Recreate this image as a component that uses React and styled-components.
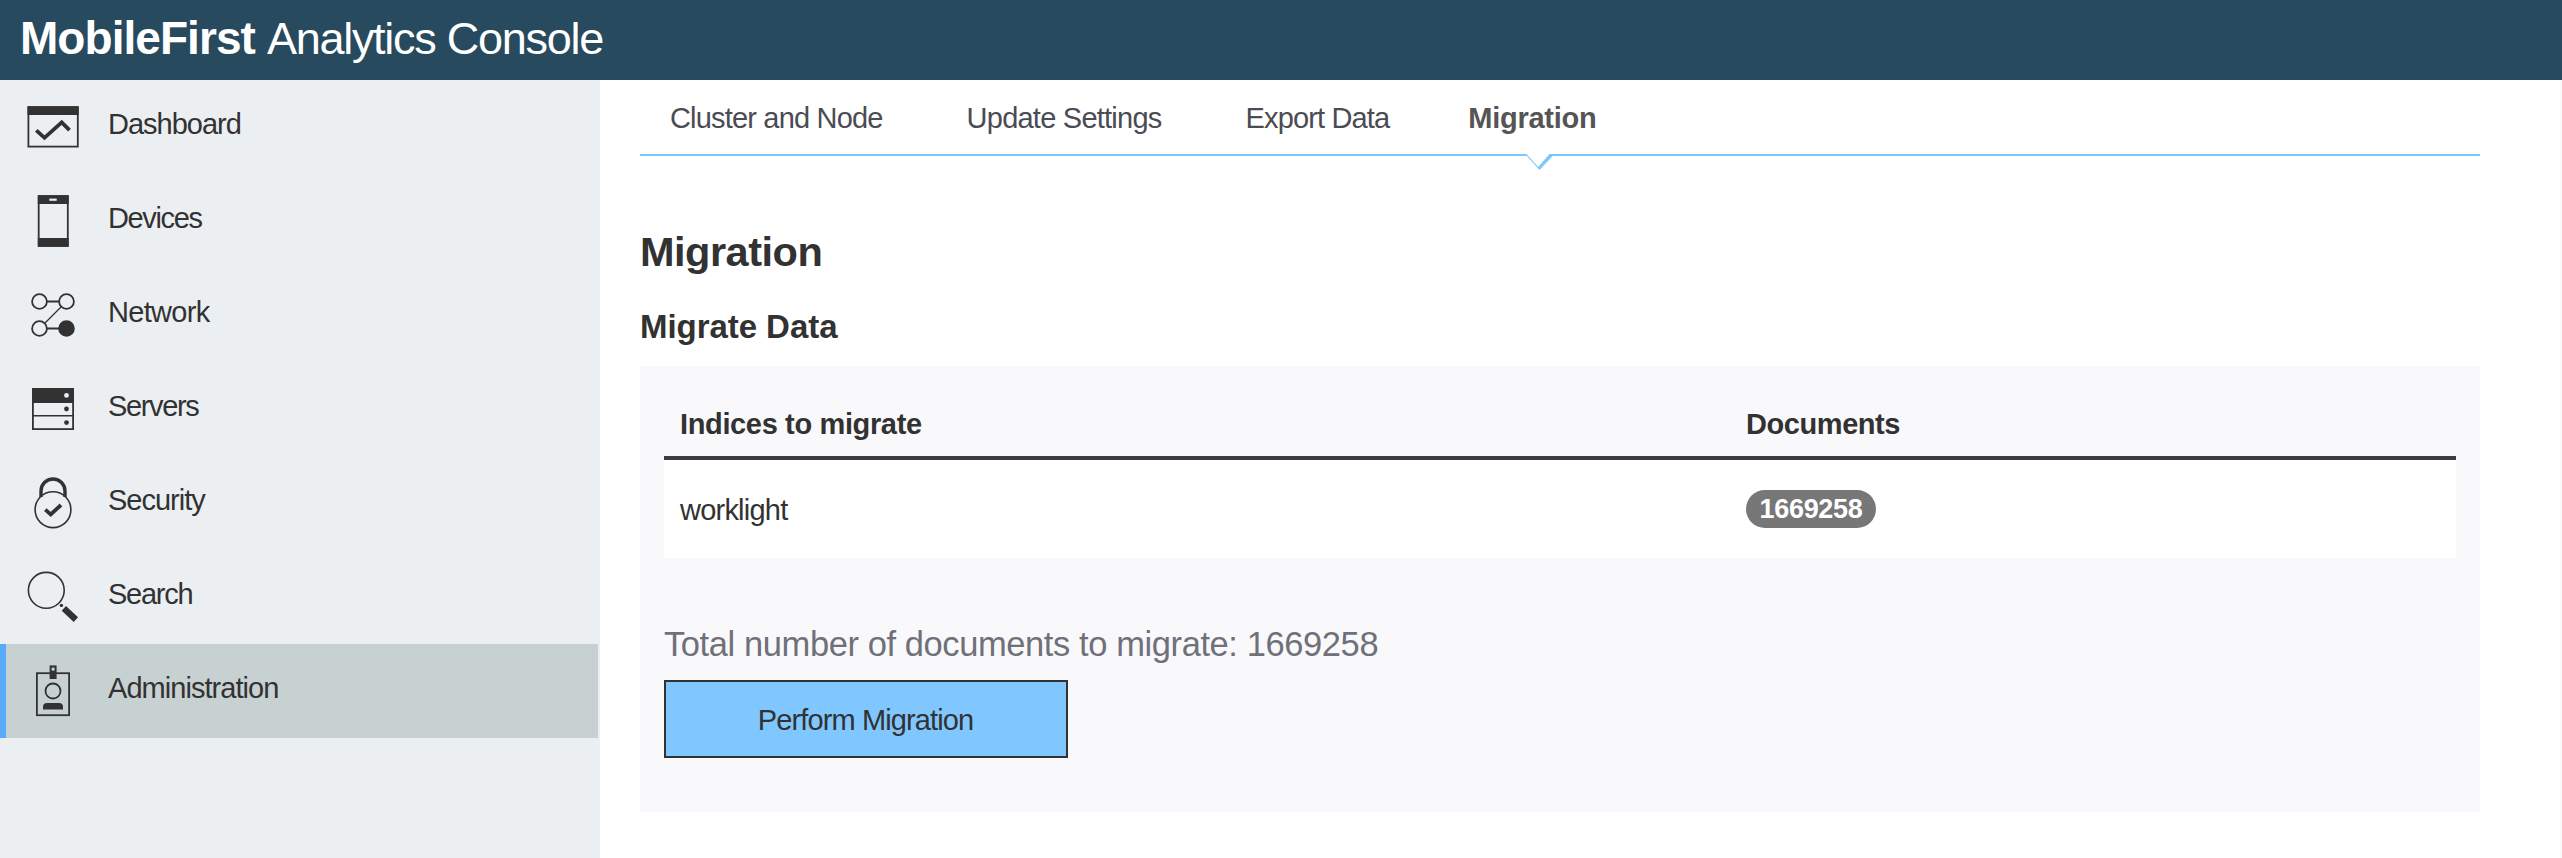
import React from "react";
import styled, { createGlobalStyle } from "styled-components";

const ink = "#323232";

const GlobalStyle = createGlobalStyle`
  *, *::before, *::after { box-sizing: border-box; }
  html, body { margin: 0; padding: 0; background: #fff; }
  body {
    font-family: "Liberation Sans", Arial, Helvetica, sans-serif;
    font-size: 29px;
    color: ${ink};
    overflow: hidden;
  }
`;

const Page = styled.div`
  display: flex;
  flex-direction: column;
  height: 100vh;
  min-height: 858px;
`;

const Header = styled.header`
  display: flex;
  align-items: baseline;
  gap: 12px;
  height: 80px;
  padding-left: 20px;
  background: #284a5e;
  color: #fff;
  line-height: 77px;
  white-space: nowrap;
`;

const Brand = styled.strong`
  font-size: 46px;
  font-weight: 700;
  letter-spacing: -0.95px;
`;

const Product = styled.span`
  font-size: 45px;
  letter-spacing: -1.27px;
`;

const Body = styled.div`
  display: flex;
  flex: 1;
`;

const Sidebar = styled.nav`
  width: 600px;
  padding-right: 2px;
  background: #ebeff2;
`;

const NavItem = styled.a`
  display: flex;
  gap: 24px;
  height: 94px;
  padding-left: 18px;
  border-left: 6px solid ${(p) => (p.$active ? "#5aaafa" : "transparent")};
  background: ${(p) => (p.$active ? "#c8d1d2" : "transparent")};
`;

const NavLabel = styled.span`
  line-height: 88px;
  letter-spacing: ${(p) => p.$track}px;
  white-space: nowrap;
`;

const IconSvg = styled.svg`
  flex: none;
  width: 60px;
  height: 94px;
  fill: none;
  stroke: ${ink};
  stroke-width: 1.8;
`;

const Main = styled.main`
  flex: 1;
  padding: 0 80px 0 40px;
  border-right: 2px solid #fafafa;
`;

const Tabs = styled.div`
  display: flex;
  gap: 84px;
  height: 76px;
  padding: 10px 0 0 30px;
  border-bottom: 2px solid #7cc7ff;
`;

const Tab = styled.a`
  position: relative;
  line-height: 56px;
  margin-left: ${(p) => (p.$active ? "-5px" : "0")};
  color: ${(p) => (p.$active ? "#555" : "#4b4b53")};
  font-weight: ${(p) => (p.$active ? 700 : 400)};
  letter-spacing: ${(p) => p.$track}px;
  white-space: nowrap;
`;

const Pointer = styled.svg`
  position: absolute;
  left: 56px;
  top: 64px;
  width: 32px;
  height: 17px;
`;

const Title = styled.h1`
  margin: 72px 0 0;
  font-size: 41.5px;
  line-height: 48px;
  letter-spacing: -0.5px;
`;

const Subtitle = styled.h2`
  margin: 31px 0 0;
  font-size: 33px;
  line-height: 40px;
  letter-spacing: -0.05px;
`;

const Panel = styled.section`
  margin-top: 19px;
  padding: 24px 24px 54px;
  background: #f9f9fb;
`;

const Row = styled.div`
  display: grid;
  grid-template-columns: 1066px 1fr;
`;

const HeadRow = styled(Row)`
  padding: 14px 0 12px;
  border-bottom: 4px solid #3c3d3f;
  font-weight: 700;
  line-height: 40px;
`;

const DataRow = styled(Row)`
  height: 98px;
  background: #fff;
  line-height: 80px;
`;

const Cell = styled.div`
  padding: ${(p) => p.$top || 0}px 16px 0;
  letter-spacing: ${(p) => p.$track || 0}px;
`;

const Badge = styled.span`
  display: block;
  width: 130px;
  height: 38px;
  border-radius: 20px;
  background: #777;
  color: #fff;
  font-size: 27px;
  font-weight: 700;
  line-height: 38px;
  letter-spacing: -0.3px;
  text-align: center;
`;

const Total = styled.p`
  margin: 62px 0 12px;
  color: #70707a;
  font-size: 34.5px;
  line-height: 48px;
  letter-spacing: -0.41px;
`;

const Button = styled.button`
  display: block;
  width: 404px;
  height: 78px;
  padding: 2px 1px 0 0;
  border: 2px solid ${ink};
  border-radius: 0;
  background: #80c7ff;
  color: ${ink};
  font: inherit;
  letter-spacing: -0.88px;
`;

const Icon = ({ children }) => (
  <IconSvg viewBox="24 0 60 94" aria-hidden="true">
    {children}
  </IconSvg>
);

const DashboardIcon = () => (
  <Icon>
    <rect x="28.4" y="27" width="49.4" height="39.6" />
    <rect x="27.5" y="26.7" width="51.2" height="8.3" fill={ink} stroke="none" />
    <path d="M36.3 50.3 44.5 57.8 61.7 42.3 69.5 50.2" strokeWidth="3.8" />
  </Icon>
);

const DevicesIcon = () => (
  <Icon>
    <rect x="38.7" y="22" width="29.1" height="50" />
    <path d="M37.8 21.4h30.9V30H37.8zM37.8 64h30.9v8.6H37.8z" fill={ink} stroke="none" />
    <rect x="49.3" y="24.6" width="7.4" height="2.2" fill="#ebeff2" stroke="none" />
  </Icon>
);

const NetworkIcon = () => (
  <Icon>
    <circle cx="39.5" cy="33.5" r="7.4" />
    <circle cx="66.5" cy="33.5" r="7.4" />
    <circle cx="39.5" cy="60.5" r="7.4" />
    <circle cx="66.5" cy="60.5" r="7.4" fill={ink} />
    <path d="M47 33.5h12M47 60.5h12" />
    <path d="M61 39 45 55" strokeWidth="1.2" />
  </Icon>
);

const ServersIcon = () => (
  <Icon>
    <rect x="32.9" y="26.9" width="40.2" height="40.2" />
    <path d="M32 26h42v15H32z" fill={ink} stroke="none" />
    <path d="M32 53.7h42" strokeWidth="1.5" />
    <circle cx="66.5" cy="33.4" r="2.4" fill="#ebeff2" stroke="none" />
    <circle cx="66.5" cy="47" r="2.4" fill={ink} stroke="none" />
    <circle cx="66.5" cy="60.6" r="2.4" fill={ink} stroke="none" />
  </Icon>
);

const SecurityIcon = () => (
  <Icon>
    <circle cx="53" cy="53.7" r="17.9" strokeWidth="1.6" />
    <path d="M41 41v-6a12 12 0 0 1 24 0v6" strokeWidth="3.4" />
    <path d="M45.3 53.7 50.7 58.5 61 49" strokeWidth="3.8" />
  </Icon>
);

const SearchIcon = () => (
  <Icon>
    <circle cx="46.3" cy="40.3" r="17.9" strokeWidth="1.6" />
    <circle cx="61.4" cy="55.4" r="1.7" fill={ink} stroke="none" />
    <path d="M66 56 61.7 60.7 73.7 72 78 67.3z" fill={ink} stroke="none" />
  </Icon>
);

const AdministrationIcon = () => (
  <Icon>
    <rect x="36.9" y="29.2" width="32.2" height="42" />
    <path d="M49.6 21.4h7V35h-7z" fill={ink} stroke="none" />
    <rect x="51.6" y="23.6" width="3" height="3" fill="#c8d1d2" stroke="none" />
    <circle cx="53" cy="47" r="7.5" />
    <path d="M43 65.5V63a4 4 0 0 1 4-4h12a4 4 0 0 1 4 4v2.5z" fill={ink} stroke="none" />
  </Icon>
);

const navItems = [
  { label: "Dashboard", track: -1.0, Glyph: DashboardIcon },
  { label: "Devices", track: -1.35, Glyph: DevicesIcon },
  { label: "Network", track: -0.7, Glyph: NetworkIcon },
  { label: "Servers", track: -1.35, Glyph: ServersIcon },
  { label: "Security", track: -1.0, Glyph: SecurityIcon },
  { label: "Search", track: -1.25, Glyph: SearchIcon },
  { label: "Administration", track: -0.95, Glyph: AdministrationIcon, active: true },
];

const tabs = [
  { label: "Cluster and Node", track: -0.82 },
  { label: "Update Settings", track: -0.76 },
  { label: "Export Data", track: -0.86 },
  { label: "Migration", track: -0.25, active: true },
];

export default function App() {
  return (
    <Page>
      <GlobalStyle />
      <Header>
        <Brand>MobileFirst</Brand>
        <Product>Analytics Console</Product>
      </Header>
      <Body>
        <Sidebar>
          {navItems.map(({ label, track, Glyph, active }) => (
            <NavItem key={label} $active={active}>
              <Glyph />
              <NavLabel $track={track}>{label}</NavLabel>
            </NavItem>
          ))}
        </Sidebar>
        <Main>
          <Tabs>
            {tabs.map(({ label, track, active }) => (
              <Tab key={label} $track={track} $active={active}>
                {label}
                {active && (
                  <Pointer viewBox="0 0 32 17" aria-hidden="true">
                    <path d="M1 0 15.5 16 30.5 0z" fill="#7cc7ff" />
                    <path d="M2.5 0 14.2 13 25.5 0z" fill="#fff" />
                  </Pointer>
                )}
              </Tab>
            ))}
          </Tabs>
          <Title>Migration</Title>
          <Subtitle>Migrate Data</Subtitle>
          <Panel>
            <HeadRow>
              <Cell $track={-0.36}>Indices to migrate</Cell>
              <Cell $track={-0.43}>Documents</Cell>
            </HeadRow>
            <DataRow>
              <Cell $top={10} $track={-0.78}>worklight</Cell>
              <Cell $top={30}>
                <Badge>1669258</Badge>
              </Cell>
            </DataRow>
            <Total>Total number of documents to migrate: 1669258</Total>
            <Button type="button">Perform Migration</Button>
          </Panel>
        </Main>
      </Body>
    </Page>
  );
}
